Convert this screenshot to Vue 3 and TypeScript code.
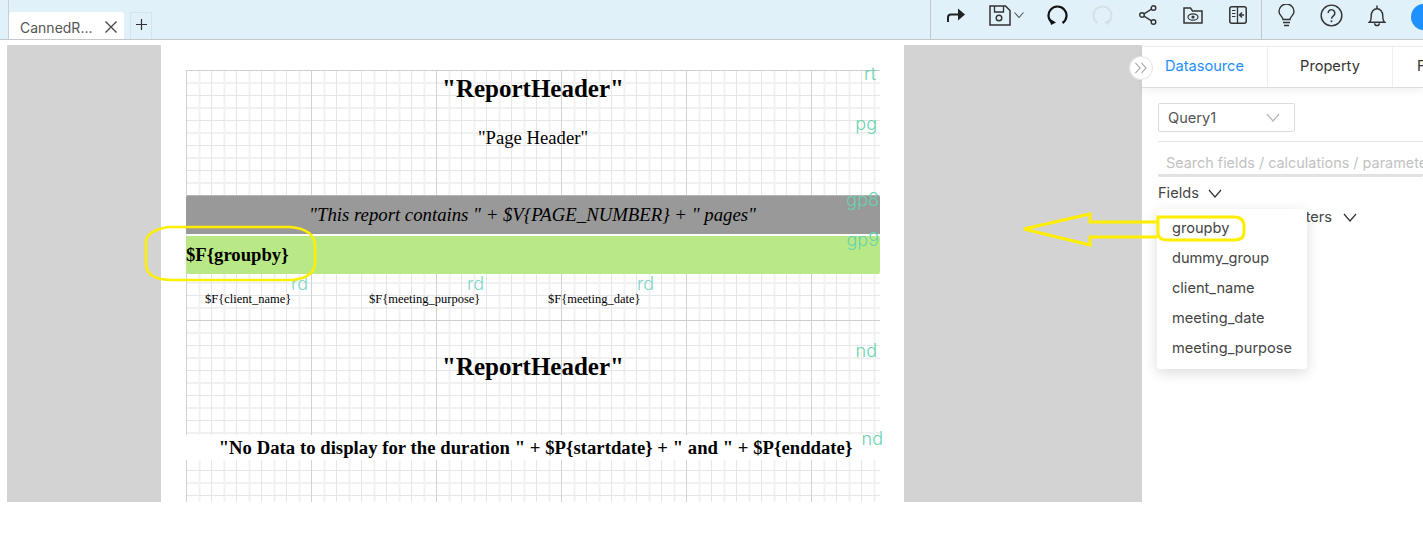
<script setup lang="ts">
const fields: string[] = ['groupby', 'dummy_group', 'client_name', 'meeting_date', 'meeting_purpose']
</script>

<template>
  <div class="app">
    <header class="topbar">
      <div class="tabs">
        <div class="tab"><span class="tab-name">CannedR...</span>
          <svg class="tab-x" width="14" height="14" viewBox="0 0 14 14"><path d="M1.500 1.500l11 11M12.500 1.500l-11 11" stroke="#444" stroke-width="1.300" fill="none"/></svg>
        </div>
        <div class="plus">
          <svg width="11" height="11" viewBox="0 0 11 11"><path d="M5.500 0v11M0 5.500h11" stroke="#333" stroke-width="1.200"/></svg>
        </div>
      </div>
      <div class="tools">
        <div class="tool-group main-tools">
          <span class="cell"><svg width="18" height="14" viewBox="0 0 18 14"><path d="M1 14V9.500q0-3 3-3h8" fill="none" stroke="#222" stroke-width="2"/><path d="M11 0.500l7 6-7 6z" fill="#222"/></svg></span>
          <span class="cell cell-save">
            <svg width="22" height="21" viewBox="0 0 22 21"><path d="M1 1h15.500l4.500 4.500V20H1z" fill="none" stroke="#333" stroke-width="1.500"/><path d="M5.500 1v6h9V1" fill="none" stroke="#333" stroke-width="1.300"/><circle cx="10" cy="13" r="2.800" fill="none" stroke="#333" stroke-width="1.400"/></svg>
            <svg width="10" height="6" viewBox="0 0 10 6"><path d="M.5.500L5 5.500l4.500-5" fill="none" stroke="#555" stroke-width="1.100"/></svg>
          </span>
          <span class="cell"><svg width="21" height="20" viewBox="0 0 21 20"><path d="M6 18.300A9 9 0 1 1 15.500 18" fill="none" stroke="#111" stroke-width="2.200"/><path d="M2.500 13.500l1.500 6.500 5-2.500z" fill="#111"/></svg></span>
          <span class="cell"><svg width="21" height="20" viewBox="0 0 21 20"><path d="M5.500 18A9 9 0 1 1 15 18.300" fill="none" stroke="#d6e0e5" stroke-width="2"/><path d="M18.500 13.500L17 20l-5-2.500z" fill="#d6e0e5"/></svg></span>
          <span class="cell"><svg width="18" height="20" viewBox="0 0 18 20"><g fill="none" stroke="#333" stroke-width="1.400"><circle cx="14.500" cy="3" r="2.300"/><circle cx="3" cy="10" r="2.300"/><circle cx="14.500" cy="17" r="2.300"/><path d="M5 8.800l7.500-4.600M5 11.200l7.500 4.600"/></g></svg></span>
          <span class="cell"><svg width="20" height="17" viewBox="0 0 20 17"><path d="M1 16V1h6.500l2 3H19v12z" fill="none" stroke="#333" stroke-width="1.500"/><ellipse cx="10" cy="10" rx="5" ry="3.200" fill="none" stroke="#333" stroke-width="1.200"/><circle cx="10" cy="10" r="1.600" fill="#333"/></svg></span>
          <span class="cell"><svg width="18" height="18" viewBox="0 0 18 18"><rect x=".8" y=".8" width="16.400" height="16.400" rx="2" fill="none" stroke="#333" stroke-width="1.500"/><path d="M8.500.8v16.400" stroke="#333" stroke-width="1.300"/><path d="M3 4.500h3.500M3 7.500h3.500M3 10.500h3.500" stroke="#333" stroke-width="1.200"/><path d="M15 9h-4M13 6.500L10.500 9l2.500 2.500" fill="none" stroke="#333" stroke-width="1.400"/></svg></span>
        </div>
        <div class="tool-group help-tools">
          <svg width="17" height="23" viewBox="0 0 17 23"><path d="M5 15.500c0-3-4-4-4-8a7.500 7.500 0 0 1 15 0c0 4-4 5-4 8z" fill="none" stroke="#333" stroke-width="1.400"/><path d="M5 18.500h7M6 21.500h5" stroke="#333" stroke-width="1.400"/></svg>
          <svg width="23" height="23" viewBox="0 0 24 24"><circle cx="12" cy="12" r="10.800" fill="none" stroke="#333" stroke-width="1.500"/><path d="M8.500 9.500a3.500 3.500 0 1 1 5.500 2.800c-1.300.9-2 1.500-2 3" fill="none" stroke="#333" stroke-width="1.500"/><circle cx="12" cy="18" r="1" fill="#333"/></svg>
          <svg width="18" height="23" viewBox="0 0 18 24"><path d="M1 19c2-1.500 2-3 2-7s2.500-7 6-7 6 3 6 7 0 5.500 2 7z" fill="none" stroke="#333" stroke-width="1.500"/><path d="M9 1.500V5M6.500 20a2.500 2.500 0 0 0 5 0" fill="none" stroke="#333" stroke-width="1.500"/></svg>
          <span class="avatar"></span>
        </div>
      </div>
    </header>

    <main class="workspace">
      <section class="canvas">
        <div class="page">
          <div class="grid">
            <div class="band report-header"><span class="title">"ReportHeader"</span><i class="tag tag-rt">rt</i></div>
            <div class="band page-header"><span class="subtitle">"Page Header"</span><i class="tag tag-pg">pg</i></div>
            <div class="band group-gray"><span class="contains">"This report contains " + $V{PAGE_NUMBER} + " pages"</span><i class="tag tag-gp">gp8</i></div>
            <div class="band group-green"><span class="groupby">$F{groupby}</span><i class="tag tag-gp">gp9</i></div>
            <div class="band detail">
              <span class="f f1">$F{client_name}<i class="tag tag-rd">rd</i></span>
              <span class="f f2">$F{meeting_purpose}<i class="tag tag-rd">rd</i></span>
              <span class="f f3">$F{meeting_date}<i class="tag tag-rd">rd</i></span>
            </div>
            <div class="band no-data-head"><span class="title">"ReportHeader"</span><i class="tag tag-nd">nd</i></div>
            <div class="band no-data"><span class="nodata-text">"No Data to display for the duration " + $P{startdate} + " and " + $P{enddate}</span><i class="tag tag-nd2">nd</i></div>
          </div>
        </div>
      </section>

      <aside class="panel">
        <button class="collapse">
          <svg width="14" height="12" viewBox="0 0 14 12"><path d="M1.500 1l4.500 5-4.500 5M7.500 1l4.500 5-4.500 5" fill="none" stroke="#9a9a9a" stroke-width="1.100"/></svg>
        </button>
        <nav class="panel-tabs">
          <span class="ptab active">Datasource</span>
          <span class="ptab">Property</span>
          <span class="ptab cut">F</span>
        </nav>
        <div class="panel-body">
          <div class="select"><span>Query1</span>
            <svg width="14" height="9" viewBox="0 0 14 9"><path d="M1 1l6 7 6-7" fill="none" stroke="#b5b5b5" stroke-width="1.200"/></svg>
          </div>
          <hr class="sep" />
          <div class="search">Search fields / calculations / parameters</div>
          <div class="acc">Fields
            <svg width="14" height="9" viewBox="0 0 14 9"><path d="M1 1l6 7 6-7" fill="none" stroke="#333" stroke-width="1.200"/></svg>
          </div>
          <div class="acc acc2"><span class="acc-label">Calculated Parameters</span>
            <svg width="14" height="9" viewBox="0 0 14 9"><path d="M1 1l6 7 6-7" fill="none" stroke="#333" stroke-width="1.200"/></svg>
          </div>
          <ul class="menu">
            <li v-for="f in fields" :key="f">{{ f }}</li>
          </ul>
        </div>
      </aside>
    </main>

    <svg class="overlay" width="1423" height="545" viewBox="0 0 1423 545">
      <g fill="none" stroke="#ffee00">
        <path stroke-width="2.600" d="M168 227H290Q314 229 315 245V263Q315 277 293 280H170Q146 279 146 264V242Q146 231 168 227Z"/>
        <path stroke-width="3" d="M1158 217H1234Q1244 217 1244 226V232Q1244 240 1234 240H1168Q1158 240 1158 233Z"/>
        <path stroke-width="3" d="M1157 222H1090V214L1024 229L1090 245V237H1157"/>
      </g>
    </svg>
  </div>
</template>

<style scoped>
.app {
  position: relative;
  width: 1423px;
  height: 545px;
  overflow: hidden;
  background: #fff;
  font-family: "Inter", "Noto Sans", sans-serif;
  color: #333;
}
.topbar {
  height: 40px;
  box-sizing: border-box;
  background: #e0f1fa;
  border-bottom: 1px solid #c4c8ca;
  display: flex;
  justify-content: space-between;
}
.tabs {
  display: flex;
  align-items: flex-end;
  margin-left: 8px;
  border-left: 1px solid #c9d0d4;
}
.tab {
  width: 115px;
  height: 27px;
  background: #fff;
  border-radius: 3px 3px 0 0;
  display: flex;
  align-items: center;
  padding-left: 11px;
  box-sizing: border-box;
  font-size: 14px;
  color: #555;
  gap: 8px;
}
.tab-name { width: 76px; white-space: nowrap; padding-top: 3px; }
.tab-x { margin-top: 3px; }
.plus {
  width: 22px;
  height: 27px;
  margin-left: 6px;
  border: 1px solid #d5e4ec;
  border-bottom: 0;
  box-sizing: border-box;
  display: flex;
  justify-content: center;
  padding-top: 6px;
}
.tools { display: flex; height: 39px; }
.tool-group { display: flex; height: 39px; flex: none; box-sizing: border-box; }
.main-tools {
  width: 332px;
  border-left: 1px solid #c4c8ca;
  border-right: 1px solid #c4c8ca;
  padding: 0 0 9px 2px;
  align-items: center;
}
.cell { width: 45px; display: inline-flex; justify-content: center; align-items: center; flex: none; }
.cell-save { width: 57px; gap: 3px; padding-left: 0; }
.help-tools {
  width: 161px;
  padding: 0 0 9px 16px;
  gap: 25px;
  align-items: center;
}
.help-tools svg { flex: none; }
.avatar {
  flex: none;
  width: 26px;
  height: 26px;
  border-radius: 50%;
  background: #1e90ff;
  margin-top: 3px;
}
.workspace {
  display: flex;
  margin-top: 5px;
  height: 500px;
}
.canvas {
  width: 1135px;
  margin-left: 7px;
  height: 457px;
  background: #d3d3d3;
  flex: none;
  overflow: hidden;
}
.page {
  width: 743px;
  height: 457px;
  margin-left: 154px;
  background: #fff;
  padding: 25px 24px 0 25px;
  box-sizing: border-box;
}
.grid {
  height: 432px;
  background-color: #fff;
  background-image:
    linear-gradient(to right, #d2d2d2 1px, transparent 1px),
    linear-gradient(to bottom, #cfcfcf 1px, transparent 1px),
    linear-gradient(to right, #e6e6e6 1px, transparent 1px),
    linear-gradient(to bottom, #e6e6e6 1px, transparent 1px),
    linear-gradient(to right, #f1f1f1 2px, transparent 2px),
    linear-gradient(to bottom, #f1f1f1 2px, transparent 2px);
  background-size: 125px 125px, 125px 250px, 25px 25px, 25px 25px, 25px 25px, 25px 25px;
  background-position: 0 0, 0 0, 0 0, 0 0, 12.5px 0, 0 12px;
  font-family: "Liberation Serif", serif;
  color: #000;
}
.band { position: relative; display: flex; justify-content: center; box-sizing: border-box; }
.report-header { height: 55px; padding-top: 4px; }
.page-header { height: 70px; padding-top: 2px; }
.title { font-size: 25px; font-weight: 700; line-height: 30px; }
.subtitle { font-size: 18.67px; line-height: 22px; }
.group-gray {
  height: 41px;
  background: #999;
  border-top: 1px solid #b5b5b5;
  border-bottom: 2px solid #fff;
  border-radius: 2px;
  align-items: center;
}
.contains { font-size: 18.75px; font-style: italic; margin-top: -1px; padding-right: 1px; }
.group-green {
  height: 38px;
  background: #b9e986;
  justify-content: flex-start;
  align-items: center;
  border-radius: 2px;
}
.groupby { font-size: 18.67px; font-weight: 700; margin-top: 0; }
.detail {
  height: 46px;
  justify-content: flex-start;
  padding: 18px 0 0 19px;
  font-size: 12.500px;
  line-height: 15px;
}
.f { position: relative; white-space: nowrap; }
.f1 { width: 164px; }
.f2 { width: 179px; }
.no-data-head { height: 115px; padding-top: 32px; }
.no-data {
  height: 25px;
  background: #fff;
  align-items: center;
}
.nodata-text { font-size: 18.67px; font-weight: 700; letter-spacing: 0.04px; margin-left: 5px; margin-top: 1px; white-space: nowrap; }
.tag {
  position: absolute;
  font-family: "Inter", sans-serif;
  font-style: normal;
  font-weight: 300;
  font-size: 18px;
  line-height: 20px;
  color: #68d3ae;
}
.tag-rt { right: 4px; top: -6px; }
.tag-pg { right: 3px; top: -11px; }
.tag-gp { right: 1px; top: -6px; }
.tag-rd { left: 86px; top: -18px; color: #7cd6c8; }
.f2 .tag-rd { left: 98px; }
.f3 .tag-rd { left: 89px; }
.tag-nd { right: 3px; top: 21px; }
.tag-nd2 { right: -3px; top: -6px; }
.panel { position: relative; flex: 1; min-width: 0; overflow: visible; }
.collapse {
  position: absolute;
  left: -13px;
  top: 11px;
  width: 24px;
  height: 24px;
  padding: 0;
  border-radius: 50%;
  background: #fff;
  border: 1px solid #e4e4e4;
  display: flex;
  align-items: center;
  justify-content: center;
  z-index: 2;
}
.panel-tabs {
  display: flex;
  height: 42px;
  margin-top: 1px;
  border-top: 1px solid #eee;
  box-sizing: border-box;
  border-bottom: 1px solid #ddd;
  box-shadow: 0 3px 8px rgba(0, 0, 0, .06);
  font-size: 14.6px;
  overflow: hidden;
}
.ptab {
  flex: none;
  width: 125px;
  text-align: center;
  line-height: 38px;
  border-right: 1px solid #eee;
  box-sizing: border-box;
}
.ptab.active { color: #1e8fff; width: 126px; }
.ptab.cut { padding-left: 24px; text-align: left; border: 0; }
.panel-body { position: relative; padding: 15px 0 0 16px; overflow: hidden; height: 440px; }
.select {
  width: 137px;
  height: 29px;
  border: 1px solid #dcdcdc;
  border-radius: 2px;
  box-sizing: border-box;
  display: flex;
  align-items: center;
  justify-content: space-between;
  padding: 0 14px 0 9px;
  font-size: 14.6px;
  color: #555;
}
.sep { border: 0; border-top: 1px solid #e8e8e8; margin: 9px 0 0; }
.search {
  height: 35px;
  line-height: 42px;
  padding-left: 8px;
  font-size: 14.4px;
  color: #c2c2c2;
  white-space: nowrap;
  overflow: hidden;
  border-bottom: 3px solid #e2e2e2;
  border-radius: 2px;
  box-sizing: border-box;
}
.acc {
  display: flex;
  align-items: center;
  gap: 9px;
  margin-top: 8px;
  font-size: 14.6px;
  line-height: 17px;
  color: #444;
}
.acc2 { margin-top: 7px; gap: 11px; }
.acc-label { width: 174px; text-align: right; white-space: nowrap; flex: none; }
.menu {
  position: absolute;
  left: 15px;
  top: 121px;
  width: 150px;
  height: 160px;
  margin: 0;
  padding: 4px 0 0 15px;
  box-sizing: border-box;
  list-style: none;
  background: #fff;
  border-radius: 3px;
  box-shadow: 0 4px 14px rgba(0, 0, 0, .14);
  font-size: 14.6px;
  color: #444;
}
.menu li { height: 30px; line-height: 30px; white-space: nowrap; }
.overlay { position: absolute; left: 0; top: 0; pointer-events: none; }
</style>
